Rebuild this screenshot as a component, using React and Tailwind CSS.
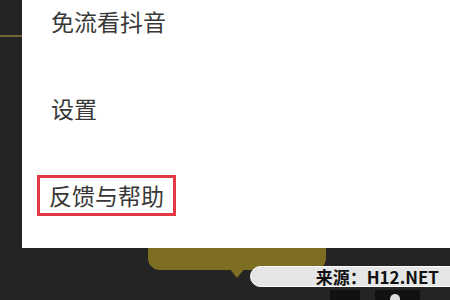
export default function App() {
  const font = { fontFamily: '"Noto Sans CJK SC", "Noto Sans", sans-serif' };

  return (
    <div className="relative h-[300px] w-[450px] overflow-hidden bg-[#242424]" style={font}>
      {/* olive line left of the sheet */}
      <div className="absolute left-0 top-[35px] h-[2px] w-[24px] bg-[#6f6734]" />

      {/* olive tooltip bubble below the sheet */}
      <div className="absolute left-[148px] top-[230px] flex flex-col items-center">
        <div className="h-[40px] w-[178px] rounded-b-[12px] bg-[#7d6e22]" />
        <div className="-mt-[2px] h-0 w-0 border-l-[8px] border-r-[8px] border-t-[10px] border-l-transparent border-r-transparent border-t-[#7d6e22]" />
      </div>

      {/* bottom dark blocks */}
      <div className="absolute left-[330px] top-[290px] flex h-[10px] items-end gap-[15px]">
        <div className="h-[10px] w-[30px] bg-[#111]" />
        <div className="relative h-[10px] w-[45px] bg-[#111]">
          <div className="absolute bottom-0 left-[15px] h-[6px] w-[10px] rounded-t-full bg-[#ddd]" />
        </div>
      </div>

      {/* menu sheet */}
      <div className="relative ml-[22px] flex h-[248px] flex-col bg-white pl-[29px] text-[23px] leading-none text-[#383838]">
        <div className="pt-[10px]">免流看抖音</div>
        <div className="pt-[64px]">设置</div>
        <div className="-ml-[14px] mt-[55px] w-fit border-[3px] border-[#e23a45] px-[9px] py-[6px]">反馈与帮助</div>
      </div>

      {/* watermark */}
      <div className="absolute left-[250px] top-[266px] flex h-[21px] w-[210px] items-center justify-end rounded-l-full border border-white bg-[#e6e6e6] pr-[20px] text-[17px] font-bold leading-none text-[#111]">
        来源：H12.NET
      </div>
    </div>
  );
}
